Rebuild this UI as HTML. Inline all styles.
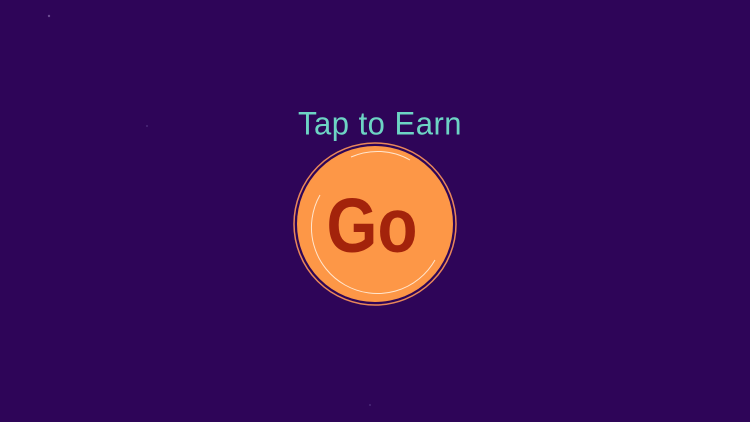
<!DOCTYPE html>
<html><head><style>
html,body{margin:0;padding:0;width:750px;height:422px;overflow:hidden;background:#2e0558;}
.t{position:absolute;left:0;width:750px;top:106px;text-align:center;font-family:"Liberation Sans",sans-serif;font-weight:300;font-size:31px;color:#6dd4c4;letter-spacing:0.5px;transform:translateX(5px) scaleY(1.05);}
.go{position:absolute;left:0;width:750px;top:182px;text-align:center;font-family:"Liberation Sans",sans-serif;font-weight:bold;font-size:77px;color:#a3230b;transform:translateX(-3px) scaleX(0.85);}
</style></head><body>
<svg width="750" height="422" style="position:absolute;left:0;top:0">
<circle cx="375" cy="224" r="81" fill="none" stroke="#e9875a" stroke-width="1.5"/>
<circle cx="375" cy="224" r="78" fill="#fd9747"/>
<path d="M 320 195 A 66 66 0 1 0 435 260" fill="none" stroke="#ffe6cf" stroke-width="1"/>
<path d="M 351 157 A 66 66 0 0 1 410 160" fill="none" stroke="#ffe6cf" stroke-width="1"/>
<circle cx="49" cy="16" r="1.2" fill="#6a4a90"/>
<circle cx="147" cy="126" r="1" fill="#4a2a78"/>
<circle cx="370" cy="405" r="1" fill="#4a2a78"/>
</svg>
<div class="t">Tap to Earn</div>
<div class="go">Go</div>
</body></html>
